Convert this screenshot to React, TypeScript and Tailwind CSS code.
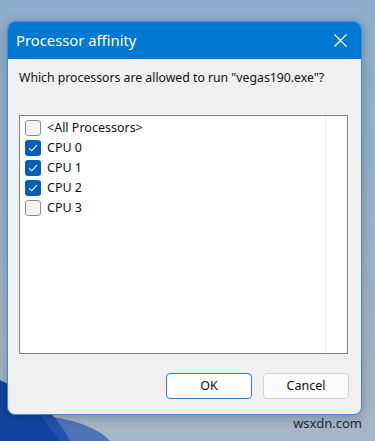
import React from 'react';

const items = [
  { label: '<All Processors>', checked: false },
  { label: 'CPU 0', checked: true },
  { label: 'CPU 1', checked: true },
  { label: 'CPU 2', checked: true },
  { label: 'CPU 3', checked: false },
];

function CheckBox({ checked }: { checked: boolean }) {
  if (checked) {
    return (
      <span className="flex h-[16px] w-[16px] items-center justify-center rounded-[3px] bg-[#0060b9]">
        <svg width="10" height="8" viewBox="0 0 10 8" fill="none">
          <path d="M1 4.2 L3.7 6.8 L9 1.2" stroke="white" strokeWidth="1.1" />
        </svg>
      </span>
    );
  }
  return <span className="h-[16px] w-[16px] rounded-[3px] border border-[#8a8a8a] bg-[#f4f4f4]" />;
}

export default function App() {
  return (
    <div
      className="relative h-[441px] w-[375px] overflow-hidden bg-gradient-to-b from-[#8eaecb] via-[#98b1c9] to-[#a7b6c6]"
      style={{ fontFamily: '"Noto Sans", "Open Sans", sans-serif' }}
    >
      {/* wallpaper bloom */}
      <svg className="absolute left-0 top-0" width="375" height="441" viewBox="0 0 375 441">
        <path d="M0 380 C30 395 55 410 70 441 L0 441 Z" fill="#1344a0" />
        <path d="M40 415 C80 420 100 430 110 441 L60 441 Z" fill="#2a59b0" opacity="0.7" />
      </svg>

      <div className="relative pl-[7px] pt-[21px]">
        <div className="flex h-[394px] w-[355px] flex-col overflow-hidden rounded-[8px] border border-[#3a8fd8] bg-[#f0f0f0] shadow-[0_2px_12px_rgba(0,0,0,0.25)]">
          <div className="flex h-[37px] shrink-0 items-center justify-between bg-[#0078d4] pl-[8px] pr-[14px]">
            <span className="text-[14.8px] text-white">Processor affinity</span>
            <svg width="13" height="13" viewBox="0 0 13 13" fill="none">
              <path d="M0.5 0.5 L12.5 12.5 M12.5 0.5 L0.5 12.5" stroke="white" strokeWidth="1.2" />
            </svg>
          </div>

          <div className="flex flex-1 flex-col pl-[11px] pr-[12px]">
            <p className="mt-[10px] text-[12.25px] leading-[17px] text-[#111]">
              Which processors are allowed to run "vegas190.exe"?
            </p>

            <div className="mt-[29px] flex h-[239px] w-[329px] border border-[#838383] bg-white">
              <div className="flex flex-1 flex-col pl-[5px] pt-[2px]">
                {items.map((it) => (
                  <div key={it.label} className="flex h-[20px] items-center gap-[6px]">
                    <CheckBox checked={it.checked} />
                    <span className="text-[12.5px] text-[#111]">{it.label}</span>
                  </div>
                ))}
              </div>
              <div className="w-[22px] border-l border-[#eef0f2]" />
            </div>

            <div className="mt-[19px] flex justify-end gap-[11px]">
              <button className="h-[26px] w-[86px] rounded-[4px] border border-[#2d7fd0] bg-[#fdfdfd] text-[12.5px] text-[#111]">
                OK
              </button>
              <button className="h-[26px] w-[86px] rounded-[4px] border border-[#d2d2d2] bg-[#fbfbfb] text-[12.5px] text-[#111]">
                Cancel
              </button>
            </div>
          </div>
        </div>
      </div>

      <div className="absolute bottom-[8px] right-[13px] text-[13px] text-[#1c2430]">wsxdn.com</div>
    </div>
  );
}
